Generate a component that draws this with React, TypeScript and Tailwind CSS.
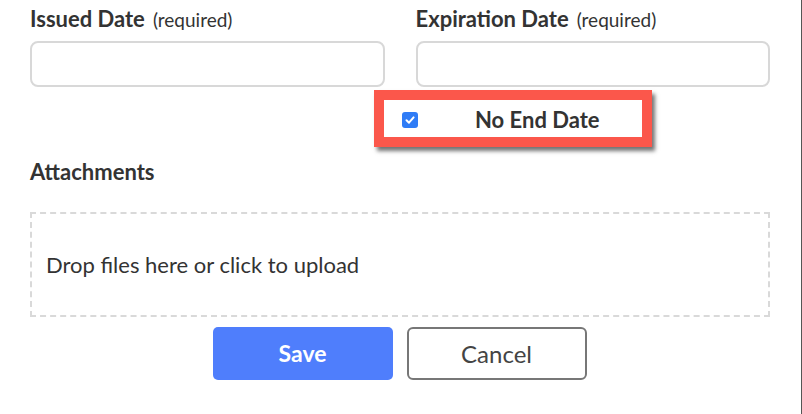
import React from 'react';

function DateField({ label }: { label: string }) {
  return (
    <div className="flex flex-col">
      <div className="flex items-baseline gap-[8px] h-[28px] mb-[8px]">
        <span className="text-[22px] font-bold leading-[28px]">{label}</span>
        <span className="text-[19px] leading-[28px]">(required)</span>
      </div>
      <div className="h-[46px] rounded-[8px] border-2 border-[#d8d8d8] bg-white" />
    </div>
  );
}

export default function App() {
  return (
    <div className="w-[802px] h-[414px] bg-white border-r border-[#555] font-['Lato','Noto_Sans',sans-serif] text-[#333]">
      <div className="pl-[30px] pr-[31px] pt-[5px]">
        <div className="grid grid-cols-2 gap-x-[31px]">
          <DateField label="Issued Date" />
          <DateField label="Expiration Date" />
        </div>

        {/* highlighted checkbox row */}
        <div className="ml-[344px] mt-[3px] w-[278px] h-[57px] border-[10px] border-[#fb574b] shadow-[3px_4px_4px_rgba(0,0,0,0.55)] flex items-start bg-white">
          <div className="ml-[18px] mt-[12px] w-[16px] h-[16px] rounded-[3px] bg-[#2f7cf6] flex items-center justify-center">
            <svg width="12" height="12" viewBox="0 0 12 12" fill="none">
              <path d="M2.5 6.3 L5 8.7 L9.6 3.4" stroke="white" strokeWidth="2" strokeLinecap="round" strokeLinejoin="round" />
            </svg>
          </div>
          <span className="ml-[57px] mt-[6px] text-[22px] font-bold leading-[28px]">No End Date</span>
        </div>

        <div className="mt-[11px] text-[22px] font-bold leading-[28px]">Attachments</div>

        <div className="mt-[26px] h-[105px] border-2 border-dashed border-[#d9d9d9] flex items-center pl-[14px]">
          <span className="text-[22px] leading-[28px]">Drop files here or click to upload</span>
        </div>

        <div className="mt-[10px] flex justify-center gap-[14px] pr-[1px]">
          <button className="w-[180px] h-[53px] rounded-[5px] bg-[#4f7efc] text-white text-[23px] font-bold">Save</button>
          <button className="w-[180px] h-[53px] rounded-[6px] border-2 border-[#777] bg-white text-[#444] text-[24px]">Cancel</button>
        </div>
      </div>
    </div>
  );
}
